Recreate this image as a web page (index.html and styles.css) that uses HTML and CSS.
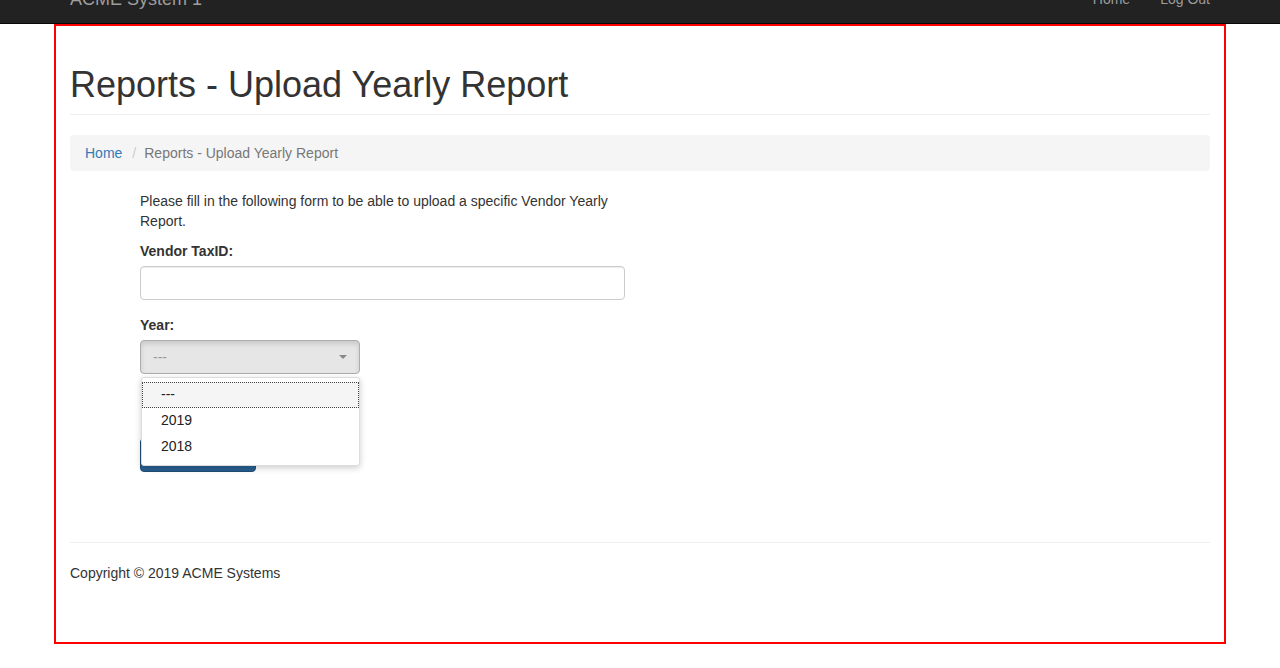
FILE: index.html
```html
<!DOCTYPE html>
<html lang="en">
<head>
<meta charset="utf-8">
<title>Reports - Upload Yearly Report</title>
<link rel="stylesheet" href="styles.css">
</head>
<body>
<nav class="navbar">
  <div class="navbar-inner">
    <a class="brand" href="#">ACME System 1</a>
    <ul class="nav-links">
      <li><a href="#">Home</a></li>
      <li><a href="#">Log Out</a></li>
    </ul>
  </div>
</nav>
<div class="page">
  <h1 class="page-header">Reports - Upload Yearly Report</h1>
  <ol class="breadcrumb">
    <li><a href="#">Home</a></li>
    <li class="sep">/</li>
    <li class="active">Reports - Upload Yearly Report</li>
  </ol>
  <div class="form-area">
    <p class="intro">Please fill in the following form to be able to upload a specific Vendor Yearly Report.</p>
    <div class="form-group">
      <label class="label">Vendor TaxID:</label>
      <div class="input"></div>
    </div>
    <div class="form-group">
      <label class="label">Year:</label>
      <div class="select-wrap">
        <div class="select"><span class="select-text">---</span><span class="caret"></span></div>
        <ul class="dropdown">
          <li class="option focused">---</li>
          <li class="option">2019</li>
          <li class="option">2018</li>
        </ul>
      </div>
    </div>
    <div class="btn">Upload</div>
  </div>
  <hr class="rule">
  <p class="footer">Copyright © 2019 ACME Systems</p>
</div>
</body>
</html>
```
FILE: styles.css
```css
* { box-sizing: border-box; }
html, body { margin: 0; padding: 0; background: #fff; }
body {
  font-family: "Liberation Sans", Arial, Helvetica, sans-serif;
  font-size: 14px;
  line-height: 20px;
  color: #333;
}
a { text-decoration: none; }

.navbar {
  height: 50px;
  margin-top: -26px;
  background: #222;
  border-bottom: 1px solid #080808;
}
.navbar-inner {
  width: 1140px;
  margin: 0 auto;
  display: flex;
  justify-content: space-between;
}
.brand {
  padding: 15px 0;
  font-size: 18px;
  line-height: 20px;
  color: #9d9d9d;
}
.nav-links {
  list-style: none;
  margin: 0;
  padding: 0;
  display: flex;
  gap: 30px;
}
.nav-links a {
  display: block;
  padding: 15px 0;
  line-height: 20px;
  color: #9d9d9d;
}

.page {
  width: 1172px;
  height: 620px;
  margin: 0 auto;
  border: 2px solid #f00;
  padding: 0 14px;
}
.page-header {
  margin: 39px 0 20px;
  padding-bottom: 9px;
  border-bottom: 1px solid #eee;
  font-size: 36px;
  font-weight: 500;
  line-height: 39.6px;
  color: #333;
}
.breadcrumb {
  list-style: none;
  margin: 0 0 20px;
  padding: 8px 15px;
  background: #f5f5f5;
  border-radius: 4px;
  display: flex;
}
.breadcrumb a { color: #337ab7; }
.breadcrumb .sep { color: #ccc; padding: 0 8px 0 10px; }
.breadcrumb .active { color: #777; }

.form-area {
  margin-left: 70px;
  width: 485px;
  padding-bottom: 50px;
}
.intro { margin: 0 0 10px; }
.form-group { margin-bottom: 15px; }
.label {
  display: block;
  font-weight: bold;
  margin-bottom: 5px;
}
.input {
  height: 34px;
  border: 1px solid #ccc;
  border-radius: 4px;
  box-shadow: inset 0 1px 1px rgba(0,0,0,.075);
  background: #fff;
}
.select-wrap { position: relative; width: 220px; }
.select {
  height: 34px;
  border: 1px solid #adadad;
  border-radius: 4px;
  background: #e6e6e6;
  box-shadow: inset 0 3px 5px rgba(0,0,0,.125);
  display: flex;
  align-items: center;
  justify-content: space-between;
  padding: 0 12px 0 12px;
}
.select-text { color: #999; }
.caret {
  width: 0;
  height: 0;
  border-top: 4px solid #888;
  border-left: 4px solid transparent;
  border-right: 4px solid transparent;
}
.dropdown {
  position: absolute;
  left: 1px;
  top: 37px;
  width: 219px;
  height: 89px;
  margin: 0;
  padding: 4px 0 0;
  list-style: none;
  background: #fff;
  border: 1px solid #ddd;
  border-radius: 3px;
  box-shadow: 0 2px 6px rgba(0,0,0,.2);
  z-index: 5;
}
.option {
  height: 26px;
  line-height: 23px;
  padding-left: 18px;
  color: #222;
  border: 1px solid transparent;
}
.option.focused {
  background: #f5f5f5;
  border: 1px dotted #444;
}
.btn {
  width: 116px;
  height: 34px;
  margin-top: 64px;
  background: #286090;
  border: 1px solid #204d74;
  border-radius: 4px;
  color: #fff;
  text-align: center;
  line-height: 32px;
}
.rule {
  margin: 20px 0;
  border: 0;
  border-top: 1px solid #eee;
}
.footer { margin: 0 0 10px; }
```
